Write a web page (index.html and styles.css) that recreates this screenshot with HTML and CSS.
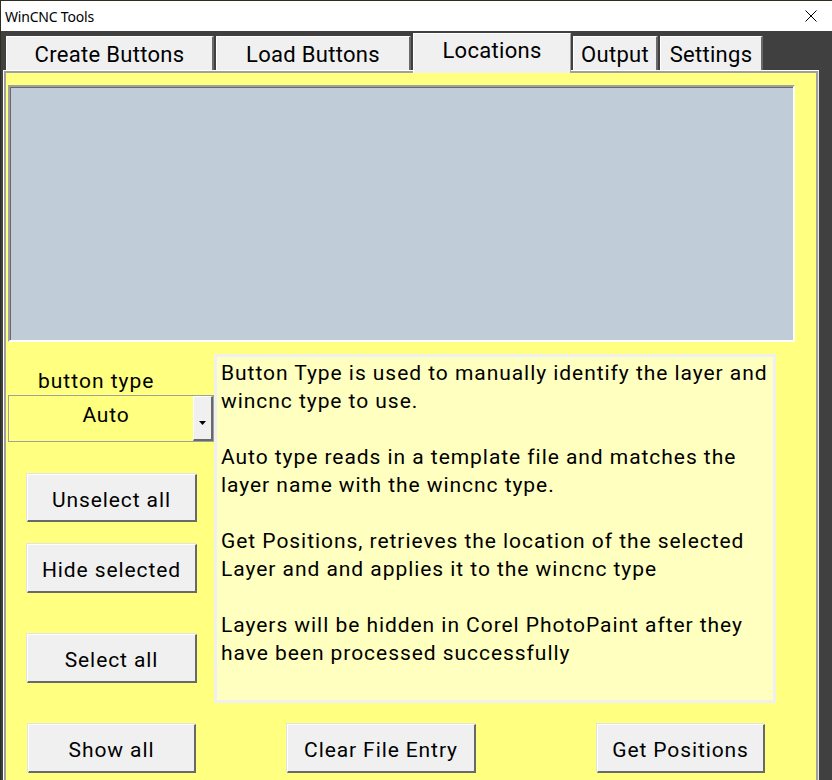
FILE: index.html
```html
<!DOCTYPE html>
<html>
<head>
<meta charset="utf-8">
<title>WinCNC Tools</title>
<link rel="stylesheet" href="styles.css">
</head>
<body>
<div class="window">
  <div class="titlebar">
    <span class="title">WinCNC Tools</span>
    <svg class="close" width="12" height="12" viewBox="0 0 12 12"><path d="M0.5 0.5 L11.5 11.5 M11.5 0.5 L0.5 11.5" stroke="#000" stroke-width="1" fill="none"/></svg>
  </div>
  <div class="tabs">
    <div class="tab t1">Create Buttons</div>
    <div class="tab t2">Load Buttons</div>
    <div class="tab active t3">Locations</div>
    <div class="tab t4">Output</div>
    <div class="tab t5">Settings</div>
  </div>
  <div class="panel">
    <div class="panel-inner">
      <div class="listbox"></div>
      <div class="middle">
        <div class="left">
          <div class="label">button type</div>
          <div class="combo">
            <span class="combo-value">Auto</span>
            <span class="combo-btn"><svg width="8" height="4" viewBox="0 0 8 4"><path d="M0 0 H7 L3.5 4 Z" fill="#000"/></svg></span>
          </div>
          <div class="btn b-unselect">Unselect all</div>
          <div class="btn b-hide">Hide selected</div>
          <div class="btn b-select">Select all</div>
        </div>
        <div class="info">
          <p>Button Type is used to manually identify the layer and wincnc type to use.</p>
          <p>Auto type reads in a template file and matches the layer name with the wincnc type.</p>
          <p>Get Positions, retrieves the location of the selected Layer and and applies it to the wincnc type</p>
          <p>Layers will be hidden in Corel PhotoPaint after they have been processed successfully</p>
        </div>
      </div>
      <div class="bottom">
        <div class="btn b-show">Show all</div>
        <div class="btn b-clear">Clear File Entry</div>
        <div class="btn b-get">Get Positions</div>
      </div>
    </div>
  </div>
</div>
</body>
</html>
```
FILE: styles.css
```css
html, body {
  margin: 0;
  padding: 0;
}
body {
  width: 832px;
  height: 780px;
  overflow: hidden;
  background: #404040;
  font-family: Roboto, "Noto Sans", sans-serif;
}
.window {
  width: 832px;
  height: 780px;
  box-sizing: border-box;
  border-top: 1px solid #2e2e1e;
  border-left: 1px solid #2e2e1e;
  background: #404040;
}
.titlebar {
  height: 30px;
  background: #fff;
  display: flex;
  align-items: center;
  justify-content: space-between;
  padding: 0 15px 0 4px;
}
.title {
  font-family: "Noto Sans", "Liberation Sans", sans-serif;
  font-size: 14px;
  color: #000;
  letter-spacing: -0.2px;
}
.close {
  display: block;
}
.tabs {
  height: 39px;
  display: flex;
  align-items: flex-end;
  gap: 2px;
  padding-left: 5px;
  position: relative;
  z-index: 2;
}
.tab {
  height: 34px;
  box-sizing: border-box;
  background: #f0f0f0;
  border-top: 1px solid #fff;
  border-left: 1px solid #fff;
  border-right: 2px solid #696969;
  display: flex;
  align-items: center;
  justify-content: center;
  font-size: 22px;
  letter-spacing: 0.3px;
  color: #000;
  padding-top: 2px;
}
.t1 { width: 208px; }
.t2 { width: 195px; }
.t3 { width: 158px; }
.t4 { width: 85px; }
.t5 { width: 103px; }
.tab.active {
  height: 40px;
  margin-bottom: -3px;
  border-right: 1px solid #a0a0a0;
  padding-top: 0;
  padding-bottom: 7px;
}
.panel {
  margin-left: 2px;
  width: 816px;
  height: 711px;
  box-sizing: border-box;
  border: 1px solid #fff;
  border-right-color: #e6e6e6;
  border-bottom: none;
  position: relative;
  z-index: 1;
}
.panel-inner {
  height: 100%;
  box-sizing: border-box;
  border: 2px solid #a0a0a0;
  border-bottom: none;
  background: #ffff80;
  padding: 12px 0 0 2px;
}
.listbox {
  width: 787px;
  height: 257px;
  box-sizing: border-box;
  background: #c0ccd8;
  border-style: solid;
  border-width: 2px;
  border-color: #a0a0a0 #fff #fff #a0a0a0;
  box-shadow: inset 1px 1px 0 #696969;
}
.middle {
  display: flex;
  align-items: flex-start;
}
.left {
  width: 206px;
  flex: none;
}
.label {
  margin-top: 27px;
  height: 24px;
  line-height: 24px;
  font-size: 21px;
  padding-left: 30px;
  letter-spacing: 1px;
}
.combo {
  margin-top: 2px;
  height: 47px;
  box-sizing: border-box;
  border: 1px solid #a0a0a0;
  background: #ffff80;
  display: flex;
  align-items: stretch;
}
.combo-value {
  flex: 1;
  display: flex;
  align-items: center;
  justify-content: center;
  font-size: 21px;
  padding-left: 10px;
  padding-bottom: 8px;
  letter-spacing: 0.8px;
}
.combo-btn {
  width: 20px;
  box-sizing: border-box;
  background: #f0f0f0;
  border-style: solid;
  border-width: 1px 2px 2px 1px;
  border-color: #fff #696969 #696969 #fff;
  display: flex;
  align-items: center;
  justify-content: center;
  padding-top: 10px;
}
.combo-btn svg {
  display: block;
}
.btn {
  box-sizing: border-box;
  background: #f0f0f0;
  border-style: solid;
  border-width: 1px 2px 2px 1px;
  border-color: #fff #696969 #696969 #fff;
  box-shadow: -1px -1px 0 #e3e3e3;
  display: flex;
  align-items: center;
  justify-content: center;
  font-size: 21px;
  color: #000;
  letter-spacing: 0.9px;
  height: 49px;
  padding-top: 4px;
}
.left .btn {
  width: 170px;
  margin-left: 19px;
}
.b-unselect { margin-top: 32px; height: 48px; }
.b-hide { margin-top: 22px; }
.b-select { margin-top: 41px; }
.info {
  margin-top: 12px;
  width: 562px;
  height: 349px;
  box-sizing: border-box;
  background: #ffffc0;
  border: 3px solid #f0f0f0;
  padding: 2px 0 0 4px;
  font-size: 21px;
  line-height: 28px;
  color: #000;
  letter-spacing: 0.95px;
}
.info p {
  margin: 0 0 28px 0;
}
.bottom {
  display: flex;
  margin-top: 21px;
}
.b-show { margin-left: 20px; width: 168px; }
.b-clear { margin-left: 91px; width: 189px; }
.b-get { margin-left: 121px; width: 168px; }
```
